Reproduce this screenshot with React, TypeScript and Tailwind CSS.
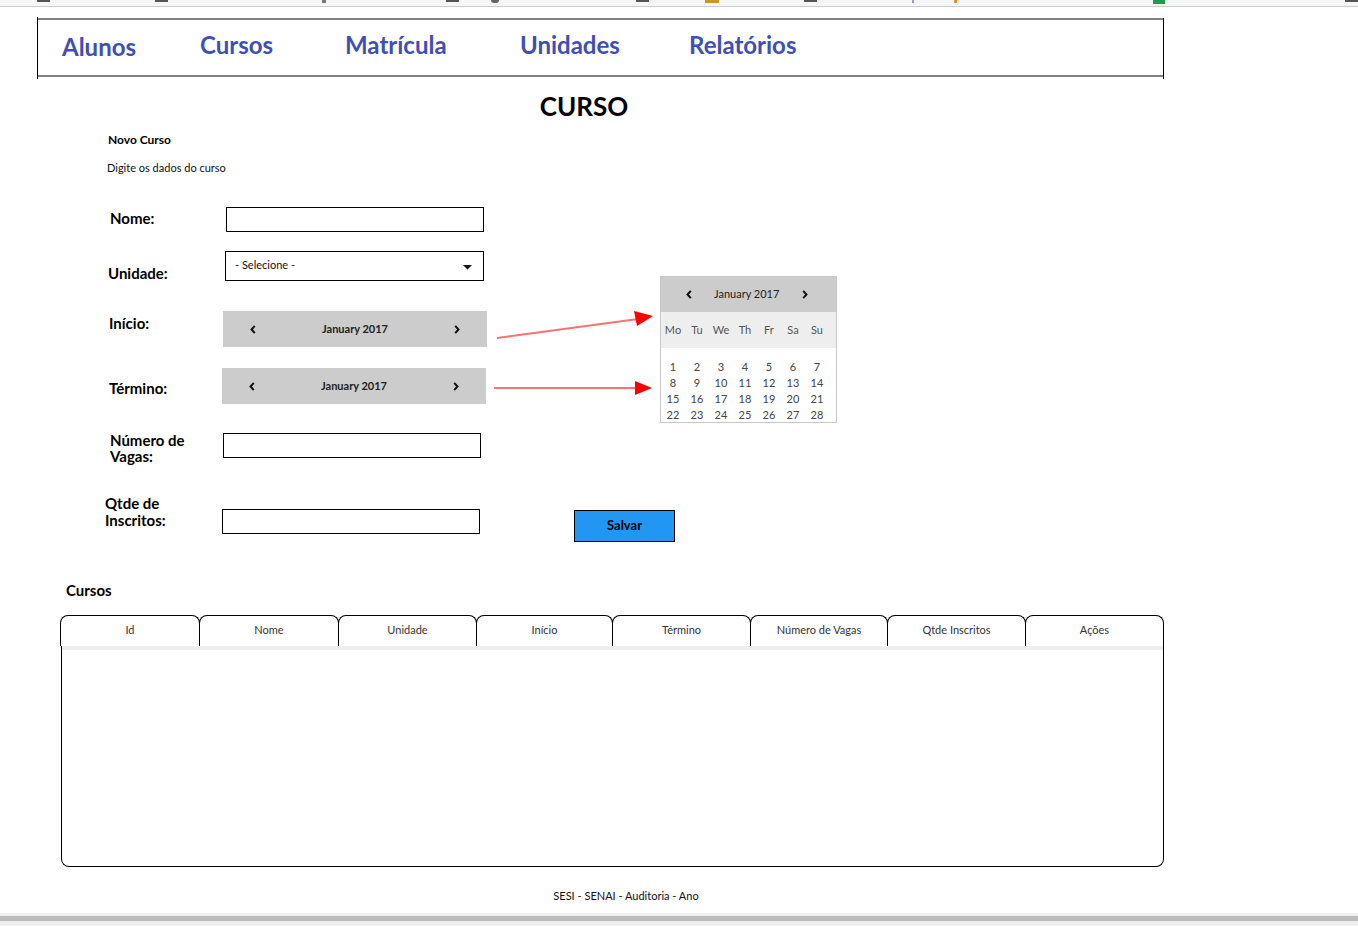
import React from "react";

const Chev = ({ dir }: { dir: "l" | "r" }) => (
  <svg width="6" height="9" viewBox="0 0 6 9" className="block">
    {dir === "l" ? (
      <path d="M4.8 0.8 L1.5 4.5 L4.8 8.2" fill="none" stroke="#111" strokeWidth="2" />
    ) : (
      <path d="M1.2 0.8 L4.5 4.5 L1.2 8.2" fill="none" stroke="#111" strokeWidth="2" />
    )}
  </svg>
);

const MonthBar = () => (
  <div className="w-[264px] h-[36px] bg-[#cccccc] flex items-center justify-between px-[27px] text-[11px] text-[#222]">
    <Chev dir="l" />
    <span>January 2017</span>
    <Chev dir="r" />
  </div>
);

const cols = [
  { t: "Id", w: 140 },
  { t: "Nome", w: 140 },
  { t: "Unidade", w: 139 },
  { t: "Início", w: 137 },
  { t: "Término", w: 139 },
  { t: "Número de Vagas", w: 138 },
  { t: "Qtde Inscritos", w: 139 },
  { t: "Ações", w: 139 },
];

const days = [
  [1, 2, 3, 4, 5, 6, 7],
  [8, 9, 10, 11, 12, 13, 14],
  [15, 16, 17, 18, 19, 20, 21],
  [22, 23, 24, 25, 26, 27, 28],
];

export default function App() {
  return (
    <div className="relative w-[1358px] h-[926px] bg-white overflow-hidden" style={{ fontFamily: "Lato, 'Open Sans', sans-serif" }}>
      {/* browser strip */}
      <div className="h-[7px] bg-[#f5f6f7] border-b border-[#c9cdd2] flex items-start">
        <div className="ml-[37px] w-[13px] h-[2px] bg-[#555]" />
        <div className="ml-[105px] w-[13px] h-[2px] bg-[#555]" />
        <div className="ml-[154px] w-[4px] h-[3px] bg-[#777]" />
        <div className="ml-[120px] w-[13px] h-[2px] bg-[#555]" />
        <div className="ml-[32px] w-[8px] h-[3px] bg-[#666] rounded-b-full" />
        <div className="ml-[137px] w-[13px] h-[2px] bg-[#555]" />
        <div className="ml-[56px] w-[14px] h-[3px] bg-[#c29a2a]" />
        <div className="ml-[85px] w-[13px] h-[2px] bg-[#555]" />
        <div className="ml-[95px] w-[2px] h-[3px] bg-[#99c]" />
        <div className="ml-[40px] w-[3px] h-[3px] bg-[#f08a24]" />
        <div className="ml-[196px] w-[12px] h-[4px] bg-[#1e9e4a]" />
        <div className="ml-[180px] w-[13px] h-[2px] bg-[#555]" />
      </div>

      {/* nav */}
      <div className="relative mt-[11px] ml-[37px] w-[1127px] h-[59px] border-t-2 border-b-2 border-[#808080] flex items-center">
        <div className="absolute left-0 top-[-3px] h-[62px] w-px bg-black" />
        <div className="absolute right-0 top-[-2px] h-[61px] w-px bg-black" />
        <div className="flex items-center text-[24px] font-bold text-[#3f4fb4] leading-[30px] mb-[6px]">
          <span className="ml-[25px] w-[138px] mt-[4px]">Alunos</span>
          <span className="w-[145px]">Cursos</span>
          <span className="w-[175px]">Matrícula</span>
          <span className="w-[169px]">Unidades</span>
          <span>Relatórios</span>
        </div>
      </div>

      {/* heading */}
      <div className="w-[1168px] text-center mt-[13px] text-[26px] font-bold leading-[32px] text-black">CURSO</div>
      <div className="ml-[108px] mt-[10px] text-[12px] font-bold leading-[16px] text-black">Novo Curso</div>
      <div className="ml-[107px] mt-[13px] text-[11px] leading-[14px] text-[#111]">Digite os dados do curso</div>

      {/* form rows */}
      <div className="text-[15px] font-bold text-black">
        <div className="flex items-start mt-[32px] h-[25px]">
          <div className="ml-[110px] w-[116px] leading-[18px] pt-[2px]">Nome:</div>
          <div className="w-[258px] h-[25px] border border-black" />
        </div>
        <div className="flex items-start mt-[19px] h-[30px]">
          <div className="ml-[108px] w-[117px] leading-[18px] pt-[13px]">Unidade:</div>
          <div className="w-[259px] h-[30px] border border-black flex items-center justify-between pl-[9px] pr-[11px]">
            <span className="text-[11px] font-normal text-[#111] leading-[14px] -mt-[2px]">- Selecione -</span>
            <svg width="9" height="5" viewBox="0 0 9 5" className="mt-[3px]"><path d="M0 0 H9 L4.5 4.5 Z" fill="#111" /></svg>
          </div>
        </div>
        <div className="flex items-start mt-[30px] h-[36px]">
          <div className="ml-[109px] w-[114px] leading-[18px] pt-[3px]">Início:</div>
          <MonthBar />
        </div>
        <div className="flex items-start mt-[21px] h-[36px]">
          <div className="ml-[109px] w-[113px] leading-[18px] pt-[11px]">Término:</div>
          <MonthBar />
        </div>
        <div className="flex items-start mt-[28px] h-[32px]">
          <div className="ml-[110px] w-[113px] leading-[16px]">Número de<br />Vagas:</div>
          <div className="w-[258px] h-[25px] mt-[1px] border border-black" />
        </div>
        <div className="flex items-start mt-[31px] h-[47px]">
          <div className="ml-[105px] w-[117px] leading-[17px]">Qtde de<br />Inscritos:</div>
          <div className="w-[258px] h-[25px] mt-[14px] border border-black" />
          <button className="ml-[94px] mt-[15px] w-[101px] h-[32px] bg-[#2196f3] border border-black text-[13px] font-bold text-black">Salvar</button>
        </div>
      </div>

      {/* table */}
      <div className="ml-[66px] mt-[39px] text-[15px] font-bold leading-[18px] text-black">Cursos</div>
      <div className="ml-[60px] mt-[16px] w-[1104px]">
        <div className="flex h-[31px]">
          {cols.map((c, i) => (
            <div
              key={c.t}
              className={`${i === 0 ? "" : "-ml-px"} h-[31px] border border-b-0 border-black rounded-t-[8px] flex items-center justify-center text-[11px] text-[#333] pb-[2px]`}
              style={{ width: c.w }}
            >
              {c.t}
            </div>
          ))}
        </div>
        <div className="h-[221px] border border-t-0 border-black rounded-b-[8px] ml-px">
          <div className="h-[4px] bg-[#eeeeee]" />
        </div>
      </div>

      <div className="w-[1252px] mt-[22px] text-center text-[11px] leading-[14px] text-[#111]">SESI - SENAI - Auditoria - Ano</div>

      <div className="mt-[10px] h-[13px] bg-[#efefef] pt-[3px]">
        <div className="h-[5px] bg-[#bcbcbc]" />
      </div>

      {/* calendar popup */}
      <div className="absolute left-[660px] top-[276px] w-[177px] h-[147px] border border-[#c8c8c8] bg-white overflow-hidden text-[11px] text-[#444]">
        <div className="h-[35px] bg-[#cccccc] flex items-center pl-[25px] text-[#222]">
          <Chev dir="l" />
          <span className="ml-[22px]">January 2017</span>
          <span className="ml-[23px]"><Chev dir="r" /></span>
        </div>
        <div className="h-[36px] bg-[#eeeeee]">
          <div className="grid grid-cols-7 w-[168px] h-[36px] items-center text-[#555]">
            {["Mo", "Tu", "We", "Th", "Fr", "Sa", "Su"].map((d) => (
              <div key={d} className="text-center">{d}</div>
            ))}
          </div>
        </div>
        <div className="pt-[11px] w-[168px]">
          {days.map((r, i) => (
            <div key={i} className="grid grid-cols-7 leading-[16px]">
              {r.map((d) => (
                <div key={d} className="text-center">{d}</div>
              ))}
            </div>
          ))}
        </div>
      </div>

      {/* annotation arrows */}
      <svg className="absolute left-0 top-0 pointer-events-none" width="1358" height="926">
        <line x1="497" y1="338" x2="638" y2="319" stroke="#ff7070" strokeWidth="2" />
        <polygon points="634,311 653,316 637,326" fill="#ff0000" />
        <line x1="494" y1="388" x2="638" y2="388" stroke="#ff7070" strokeWidth="2" />
        <polygon points="635,381 652,388 635,395" fill="#ff0000" />
      </svg>
    </div>
  );
}
